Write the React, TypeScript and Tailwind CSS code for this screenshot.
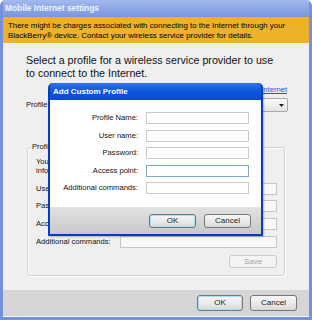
import React from "react";

const font = { fontFamily: '"Liberation Sans", Arial, sans-serif' };

function Btn({ label, className = "", disabled = false }: { label: string; className?: string; disabled?: boolean }) {
  return (
    <div
      className={
        "flex items-center justify-center rounded-[3px] border text-[8px] " +
        (disabled
          ? "border-[#cacaca] bg-[#f3f3f3] text-[#a3a3a3] "
          : "border-[#767676] bg-gradient-to-b from-[#f6f6f6] via-[#ebebeb] to-[#d8d8d8] text-[#1a1a1a] ") +
        className
      }
    >
      {label}
    </div>
  );
}

function Field({ className = "" }: { className?: string }) {
  return <div className={"h-[12px] w-[157px] border border-[#c6c6c6] bg-[#f8f8f8] " + className} />;
}

export default function App() {
  return (
    <div className="relative h-[320px] w-[312px] overflow-hidden bg-white" style={font}>
      {/* Main window */}
      <div className="flex h-full w-full flex-col rounded-t-[6px] bg-[#7590dc] px-[3px] pb-[3px]">
        <div className="flex h-[17px] shrink-0 items-center bg-gradient-to-b from-[#a3b9ee] to-[#7a95dd] pl-[2px] text-[8.4px] font-bold text-[#eef2fc]">
          Mobile Internet settings
        </div>
        <div className="flex flex-1 flex-col bg-[#efefef]">
          <div className="h-[26px] shrink-0 whitespace-nowrap bg-[#eeb12a] pl-[5px] pt-[4px] text-[7.9px] leading-[10px] text-black">
            <div>There might be charges associated with connecting to the Internet through your</div>
            <div>BlackBerry® device. Contact your wireless service provider for details.</div>
          </div>
          <div className="flex h-[247px] shrink-0 flex-col pl-[23px] pr-[22px] pt-[11px]">
            <div className="h-[26px] whitespace-nowrap text-[10.7px] leading-[13px] text-[#111]">
              Select a profile for a wireless service provider to use
              <br />
              to connect to the Internet.
            </div>
            <div className="mt-[5px] flex h-[10px] items-center justify-end text-[7.6px] text-[#2255cc] underline">
              Connect to the Internet
            </div>
            <div className="mt-[3px] flex h-[14px] items-center">
              <span className="text-[7.6px] text-[#111]">Profile</span>
              <div className="ml-auto mr-[-1px] flex h-[14px] w-[200px] items-center justify-end rounded-[2px] border border-[#a8a8a8] bg-gradient-to-b from-[#fafafa] to-[#e4e4e4] pr-[3px]">
                <svg width="5" height="3" viewBox="0 0 5 3"><path d="M0 0h5L2.5 3z" fill="#222" /></svg>
              </div>
            </div>
            <div className="relative ml-[1px] mt-[35px] h-[129px] w-[258px] shrink-0 rounded-[3px] border border-[#d2d2d2] shadow-[inset_1px_1px_0_#fff,1px_1px_0_#fff]">
              <span className="absolute left-[3px] top-[-6px] bg-[#efefef] px-[1px] text-[7.6px] leading-[10px] text-[#111]">Profile details</span>
              <div className="whitespace-nowrap px-[8px] pt-[10px] text-[7.6px] leading-[8.5px] text-[#111]">
                You can enter a new profile or change the profile
                <br />
                information below.
              </div>
              <div className="flex flex-col pl-[8px] pr-[7px] text-[7.6px] text-[#111]">
                <div className="mt-[8px] flex h-[12px] items-center justify-between"><span>User name:</span><Field /></div>
                <div className="mt-[5px] flex h-[12px] items-center justify-between"><span>Password:</span><Field /></div>
                <div className="mt-[6px] flex h-[12px] items-center justify-between"><span>Access point:</span><Field /></div>
                <div className="mt-[6px] flex h-[12px] items-center justify-between"><span>Additional commands:</span><Field /></div>
              </div>
              <div className="mt-[7px] flex justify-end pr-[7px]">
                <Btn label="Save" disabled className="h-[13px] w-[48px]" />
              </div>
            </div>
          </div>
          <div className="flex h-[27px] shrink-0 items-center justify-end gap-[7px] border-b border-[#f6f6f6] bg-[#d5d5d5] pr-[12px]">
            <Btn label="OK" className="h-[16px] w-[46px] border-[#3c7fb1] shadow-[inset_0_0_0_1px_#a6e0f7]" />
            <Btn label="Cancel" className="h-[16px] w-[47px]" />
          </div>
        </div>
      </div>

      {/* Add Custom Profile dialog */}
      <div className="absolute left-[48px] top-[83px] flex h-[153px] w-[215px] flex-col rounded-t-[5px] bg-[#0b3aba] px-[2px] pb-[2px] shadow-[1px_1px_2px_rgba(0,0,0,0.25)]">
        <div className="flex h-[17px] shrink-0 items-center rounded-t-[4px] bg-gradient-to-b from-[#2d74ea] via-[#0d56dd] to-[#0a4ad2] pl-[3px] text-[8px] font-bold text-white">
          Add Custom Profile
        </div>
        <div className="flex flex-1 flex-col bg-white">
          <div className="flex flex-col gap-[5.5px] pt-[12px] text-[7.6px] text-[#111]">
            {["Profile Name:", "User name:", "Password:", "Access point:", "Additional commands:"].map((l, i) => (
              <div key={l} className="flex h-[12px] items-center">
                <span className="w-[88px] text-right">{l}</span>
                <div
                  className={
                    "ml-[8px] h-[12px] w-[103px] border " +
                    (i === 3 ? "border-[#7eaacb]" : "border-[#cacaca]")
                  }
                />
              </div>
            ))}
          </div>
          <div className="mt-auto flex h-[27px] items-center justify-end gap-[8px] bg-gradient-to-b from-[#e2e2e2] to-[#c8c8c8] pr-[10px]">
            <Btn label="OK" className="h-[14px] w-[47px] border-[#3c7fb1] shadow-[inset_0_0_0_1px_#a6e0f7]" />
            <Btn label="Cancel" className="h-[14px] w-[47px]" />
          </div>
        </div>
      </div>
    </div>
  );
}
